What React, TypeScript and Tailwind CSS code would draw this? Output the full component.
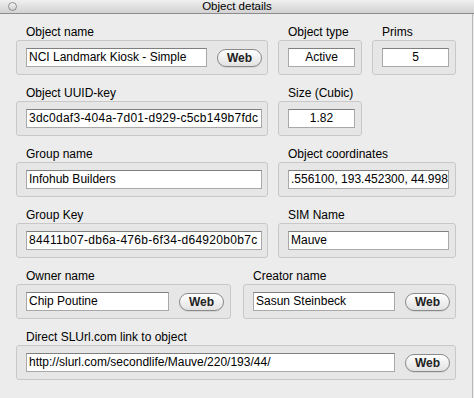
import React from 'react';

const font = { fontFamily: '"Liberation Sans", Arial, sans-serif' };

function Field({ value, className = '', center = false }: { value: string; className?: string; center?: boolean }) {
  return (
    <div
      className={`h-[19px] bg-white border border-[#a9a9a9] border-t-[#7f7f7f] overflow-hidden whitespace-nowrap text-[12px] leading-[17px] text-black px-[2px] ${center ? 'text-center' : ''} ${className}`}
    >
      {value}
    </div>
  );
}

function WebButton() {
  return (
    <div className="w-[45px] h-[18px] shrink-0 rounded-full border border-[#8a8a8a] bg-gradient-to-b from-white to-[#e2e2e2] flex items-center justify-center text-[12px] font-bold text-[#222] shadow-[0_1px_0_rgba(0,0,0,0.08)]">
      Web
    </div>
  );
}

function Group({
  label,
  width,
  children,
}: {
  label: string;
  width: string;
  children: React.ReactNode;
}) {
  return (
    <div className={`${width} shrink-0 flex flex-col`}>
      <div className="h-[15px] pl-[10px] text-[12px] leading-[15px] text-black">{label}</div>
      <div className="h-[35px] rounded-[3px] border border-[#c8c8c8] bg-[#e6e6e6] flex items-center pl-[9px] pr-[5px] gap-[10px]">
        {children}
      </div>
    </div>
  );
}

export default function App() {
  return (
    <div className="w-[474px] h-[398px] bg-[#ececec] relative overflow-hidden" style={font}>
      <div className="h-[14px] bg-gradient-to-b from-[#f0f0f0] to-[#d2d2d2] border-b border-[#8c8c8c] flex items-center justify-center relative">
        <div className="absolute left-[8px] top-[2px] w-[9px] h-[9px] rounded-full border border-[#8e8e8e] bg-gradient-to-b from-[#f4f4f4] to-[#cfcfcf]" />
        <span className="text-[11.5px] leading-[13px] text-black">Object details</span>
      </div>
      <div className="absolute right-[1px] top-[14px] bottom-0 w-px bg-[#b8b8b8]" />

      <div className="pl-[16px] pt-[11px] flex flex-col gap-[11px]">
        <div className="flex gap-[10px]">
          <Group label="Object name" width="w-[252px]">
            <Field value="NCI Landmark Kiosk - Simple" className="w-[182px]" />
            <WebButton />
          </Group>
          <Group label="Object type" width="w-[84px]">
            <Field value="Active" center className="w-[67px]" />
          </Group>
          <Group label="Prims" width="w-[84px]">
            <Field value="5" center className="w-[67px]" />
          </Group>
        </div>

        <div className="flex gap-[10px]">
          <Group label="Object UUID-key" width="w-[252px]">
            <Field value="3dc0daf3-404a-7d01-d929-c5cb149b7fdc" className="w-[236px] tracking-[0.25px]" />
          </Group>
          <Group label="Size (Cubic)" width="w-[84px]">
            <Field value="1.82" center className="w-[67px]" />
          </Group>
        </div>

        <div className="flex gap-[10px]">
          <Group label="Group name" width="w-[252px]">
            <Field value="Infohub Builders" className="w-[236px]" />
          </Group>
          <Group label="Object coordinates" width="w-[178px]">
            <Field value=".556100, 193.452300, 44.998" className="w-[161px]" />
          </Group>
        </div>

        <div className="flex gap-[10px]">
          <Group label="Group Key" width="w-[252px]">
            <Field value="84411b07-db6a-476b-6f34-d64920b0b7c" className="w-[236px] tracking-[0.3px]" />
          </Group>
          <Group label="SIM Name" width="w-[178px]">
            <Field value="Mauve" className="w-[161px]" />
          </Group>
        </div>

        <div className="flex gap-[12px]">
          <Group label="Owner name" width="w-[215px]">
            <Field value="Chip Poutine" className="w-[143px]" />
            <WebButton />
          </Group>
          <Group label="Creator name" width="w-[213px]">
            <Field value="Sasun Steinbeck" className="w-[143px]" />
            <WebButton />
          </Group>
        </div>

        <div className="flex">
          <Group label="Direct SLUrl.com link to object" width="w-[440px]">
            <Field value="http://slurl.com/secondlife/Mauve/220/193/44/" className="w-[370px]" />
            <WebButton />
          </Group>
        </div>
      </div>
    </div>
  );
}
